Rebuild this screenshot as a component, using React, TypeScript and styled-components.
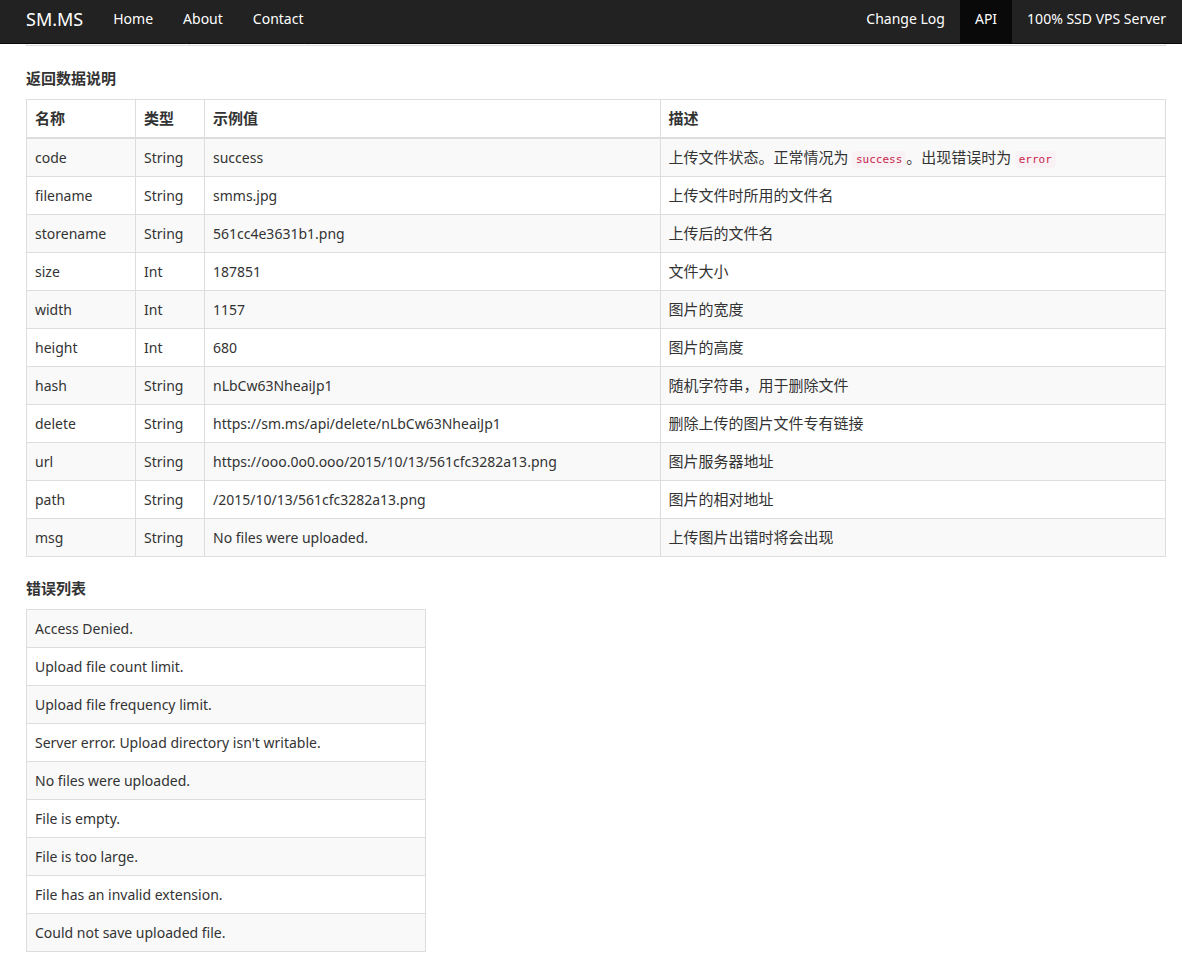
import React from "react";
import styled, { createGlobalStyle } from "styled-components";

const latin = '"Noto Sans", "Noto Sans CJK SC", sans-serif';
const han = '"Noto Sans CJK SC", "Noto Sans", sans-serif';

const GlobalStyle = createGlobalStyle`
  *, *::before, *::after { box-sizing: border-box; }
  body {
    margin: 0;
    background: #fff;
    color: #333;
    font: 400 14px/21px ${latin};
  }
`;

const Navbar = styled.nav`
  position: sticky;
  top: 0;
  z-index: 10;
  display: flex;
  justify-content: space-between;
  padding: 0 1px 0 11px;
  background: #222;
  border-bottom: 1px solid #090909;
`;

const NavGroup = styled.div`
  display: flex;
`;

const NavLink = styled.a<{ $active?: boolean }>`
  padding: 8px 15px 14px;
  color: #fff;
  background: ${(p) => (p.$active ? "#090909" : "transparent")};
  text-decoration: none;
  white-space: nowrap;
`;

const Brand = styled(NavLink)`
  padding: 9px 15px 13px;
  font-size: 18px;
`;

const Content = styled.main`
  padding: 0 16px 8px 26px;
`;

const TableTail = styled.div`
  display: grid;
  grid-template-columns: 163px 118px 1fr;
  height: 2px;
  margin-bottom: 21px;
  border: 1px solid #ddd;
  border-top: 0;
`;

const TailCell = styled.span`
  border-right: 1px solid #ddd;

  &:last-child { border-right: 0; }
`;

const Heading = styled.h2`
  margin: 0 0 11px;
  font: 700 15px/21px ${han};
`;

const Table = styled.table<{ $width: string }>`
  width: ${(p) => p.$width};
  max-width: 100%;
  margin-bottom: 20px;
  table-layout: fixed;
  border-collapse: collapse;
  border: 1px solid #ddd;

  tbody tr:nth-child(odd) { background: #f9f9f9; }
`;

const Col = styled.col<{ $width?: string }>`
  width: ${(p) => p.$width ?? "auto"};
`;

const HeadCell = styled.th`
  padding: 7px 8px 9px;
  border: 1px solid #ddd;
  border-bottom-width: 2px;
  font: 700 15px/21px ${han};
  text-align: left;
`;

const Cell = styled.td<{ $han?: boolean }>`
  height: 38px;
  padding: ${(p) => (p.$han ? "7px 8px 9px" : "8px")};
  border: 1px solid #ddd;
  font: ${(p) => (p.$han ? `400 15px/21px ${han}` : "inherit")};
`;

const Code = styled.code`
  padding: 2px 4px;
  border-radius: 4px;
  background: #f9f2f4;
  color: #c7254e;
  font: 11px "DejaVu Sans Mono", monospace;
`;

const fields: [string, string, string, React.ReactNode][] = [
  ["code", "String", "success", <>上传文件状态。正常情况为 <Code>success</Code>。出现错误时为 <Code>error</Code></>],
  ["filename", "String", "smms.jpg", "上传文件时所用的文件名"],
  ["storename", "String", "561cc4e3631b1.png", "上传后的文件名"],
  ["size", "Int", "187851", "文件大小"],
  ["width", "Int", "1157", "图片的宽度"],
  ["height", "Int", "680", "图片的高度"],
  ["hash", "String", "nLbCw63NheaiJp1", "随机字符串，用于删除文件"],
  ["delete", "String", "https://sm.ms/api/delete/nLbCw63NheaiJp1", "删除上传的图片文件专有链接"],
  ["url", "String", "https://ooo.0o0.ooo/2015/10/13/561cfc3282a13.png", "图片服务器地址"],
  ["path", "String", "/2015/10/13/561cfc3282a13.png", "图片的相对地址"],
  ["msg", "String", "No files were uploaded.", "上传图片出错时将会出现"],
];

const errors = [
  "Access Denied.",
  "Upload file count limit.",
  "Upload file frequency limit.",
  "Server error. Upload directory isn't writable.",
  "No files were uploaded.",
  "File is empty.",
  "File is too large.",
  "File has an invalid extension.",
  "Could not save uploaded file.",
];

export default function App() {
  return (
    <div lang="zh-CN">
      <GlobalStyle />
      <Navbar>
        <NavGroup>
          <Brand href="#">SM.MS</Brand>
          <NavLink href="#home">Home</NavLink>
          <NavLink href="#about">About</NavLink>
          <NavLink href="#contact">Contact</NavLink>
        </NavGroup>
        <NavGroup>
          <NavLink href="#changelog">Change Log</NavLink>
          <NavLink href="#api" $active aria-current="page">API</NavLink>
          <NavLink href="#vps">100% SSD VPS Server</NavLink>
        </NavGroup>
      </Navbar>
      <Content>
        <TableTail aria-hidden="true">
          <TailCell />
          <TailCell />
          <TailCell />
        </TableTail>
        <Heading id="fields">返回数据说明</Heading>
        <Table $width="100%" aria-labelledby="fields">
          <colgroup>
            <Col $width="109px" />
            <Col $width="69px" />
            <Col $width="40%" />
            <Col />
          </colgroup>
          <thead>
            <tr>
              <HeadCell scope="col">名称</HeadCell>
              <HeadCell scope="col">类型</HeadCell>
              <HeadCell scope="col">示例值</HeadCell>
              <HeadCell scope="col">描述</HeadCell>
            </tr>
          </thead>
          <tbody>
            {fields.map(([name, type, example, description]) => (
              <tr key={name}>
                <Cell>{name}</Cell>
                <Cell>{type}</Cell>
                <Cell>{example}</Cell>
                <Cell $han>{description}</Cell>
              </tr>
            ))}
          </tbody>
        </Table>
        <Heading id="errors">错误列表</Heading>
        <Table $width="400px" aria-labelledby="errors">
          <tbody>
            {errors.map((message) => (
              <tr key={message}>
                <Cell>{message}</Cell>
              </tr>
            ))}
          </tbody>
        </Table>
      </Content>
    </div>
  );
}
